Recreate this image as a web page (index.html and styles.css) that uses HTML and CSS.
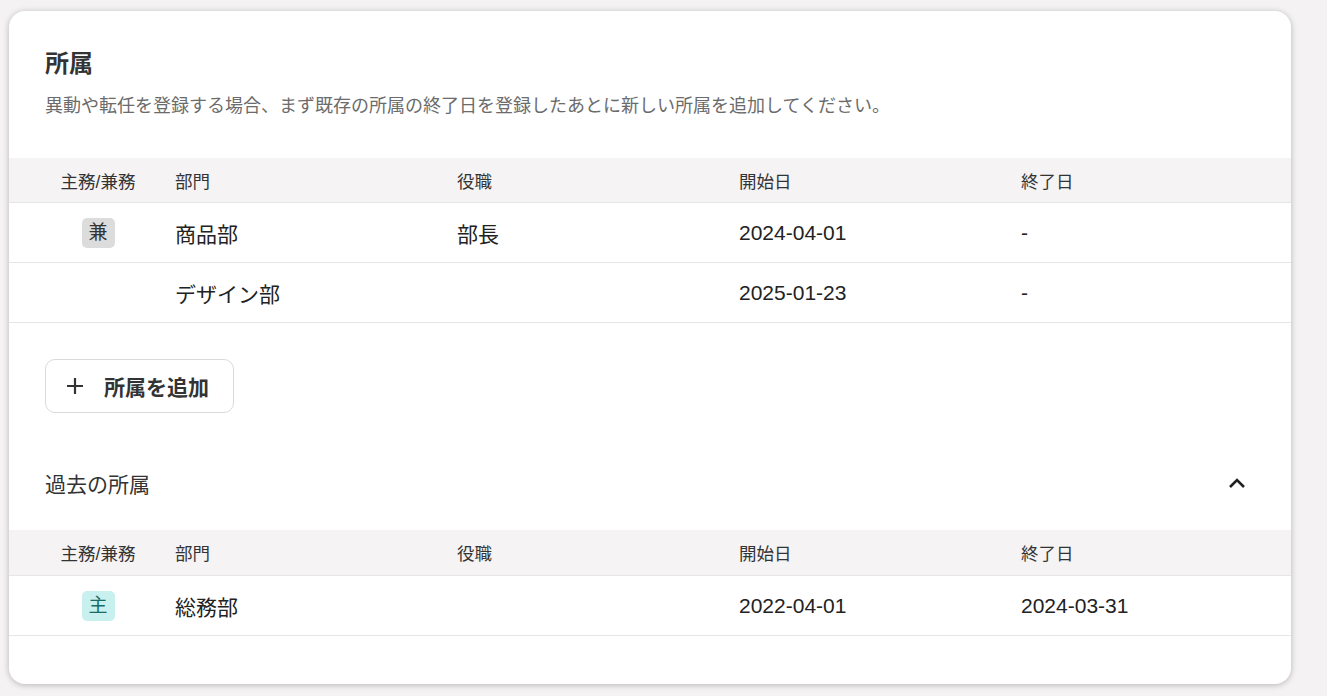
FILE: index.html
```html
<!DOCTYPE html>
<html lang="ja">
<head>
    <meta charset="UTF-8">
    <meta name="viewport" content="width=device-width, initial-scale=1.0">
    <title>所属</title>
    <link rel="stylesheet" href="styles.css">
</head>
<body>
    <div class="card">
        <div class="card-head">
            <h2 class="title">所属</h2>
            <p class="desc">異動や転任を登録する場合、まず既存の所属の終了日を登録したあとに新しい所属を追加してください。</p>
        </div>

        <div class="table">
            <div class="row head">
                <div class="cell type">主務/兼務</div>
                <div class="cell">部門</div>
                <div class="cell">役職</div>
                <div class="cell">開始日</div>
                <div class="cell">終了日</div>
            </div>
            <div class="row">
                <div class="cell type"><span class="badge sub">兼</span></div>
                <div class="cell">商品部</div>
                <div class="cell">部長</div>
                <div class="cell">2024-04-01</div>
                <div class="cell">-</div>
            </div>
            <div class="row">
                <div class="cell type"></div>
                <div class="cell">デザイン部</div>
                <div class="cell"></div>
                <div class="cell">2025-01-23</div>
                <div class="cell">-</div>
            </div>
        </div>

        <div class="actions">
            <button class="add-btn" type="button">
                <svg width="18" height="18" viewBox="0 0 18 18"><path d="M9 1v16M1 9h16" stroke="#333" stroke-width="2.2" fill="none"/></svg>
                <span>所属を追加</span>
            </button>
        </div>

        <div class="past-head">
            <span>過去の所属</span>
            <svg class="chevron" width="18" height="12" viewBox="0 0 18 12"><path d="M2 10l7-7 7 7" stroke="#222" stroke-width="2.6" fill="none"/></svg>
        </div>

        <div class="table">
            <div class="row head past">
                <div class="cell type">主務/兼務</div>
                <div class="cell">部門</div>
                <div class="cell">役職</div>
                <div class="cell">開始日</div>
                <div class="cell">終了日</div>
            </div>
            <div class="row">
                <div class="cell type"><span class="badge main">主</span></div>
                <div class="cell">総務部</div>
                <div class="cell"></div>
                <div class="cell">2022-04-01</div>
                <div class="cell">2024-03-31</div>
            </div>
        </div>
    </div>
</body>
</html>
```

FILE: styles.css
```css
html, body {
    margin: 0;
    background-color: #f4f2f3;
}

body {
    padding: 11px 36px 12px 9px;
    font-family: "Liberation Sans", "Noto Sans CJK JP", sans-serif;
    color: #222;
}

.card {
    background-color: #fff;
    border-radius: 16px;
    box-shadow: 0 1px 6px rgba(0, 0, 0, 0.25);
    height: 673px;
}

.card-head {
    padding: 38px 36px 40px;
}

.title {
    margin: 0;
    font-size: 24px;
    line-height: 30px;
    font-weight: bold;
    color: #333;
}

.desc {
    margin: 15px 0 0;
    font-size: 18px;
    line-height: 24px;
    color: #6b6b6b;
}

.row {
    display: grid;
    grid-template-columns: 150px 282px 282px 282px 1fr;
    align-items: center;
    height: 59px;
    border-bottom: 1px solid #e6e6e6;
    font-size: 21px;
}

.row.head {
    height: 44px;
    background-color: #f5f3f4;
    font-size: 17.5px;
    color: #333;
}

.row.head.past {
    height: 45px;
}

.cell {
    padding-left: 16px;
}

.cell.type {
    padding-left: 28px;
    text-align: center;
}

.badge {
    display: inline-block;
    width: 33px;
    height: 30px;
    line-height: 30px;
    border-radius: 5px;
    font-size: 19px;
    text-align: center;
}

.badge.sub {
    background-color: #dcdcdc;
    color: #333;
}

.badge.main {
    background-color: #c8f0ee;
    color: #1c6b66;
}

.actions {
    padding: 36px 36px 0;
}

.add-btn {
    display: flex;
    align-items: center;
    gap: 20px;
    height: 54px;
    padding: 0 24px 0 20px;
    background-color: #fff;
    border: 1px solid #dadada;
    border-radius: 10px;
    font-family: inherit;
    font-size: 21px;
    font-weight: bold;
    color: #333;
}

.past-head {
    display: flex;
    justify-content: space-between;
    align-items: center;
    padding: 56px 45px 34px 36px;
    height: 27px;
    font-size: 21px;
    color: #333;
}
```
